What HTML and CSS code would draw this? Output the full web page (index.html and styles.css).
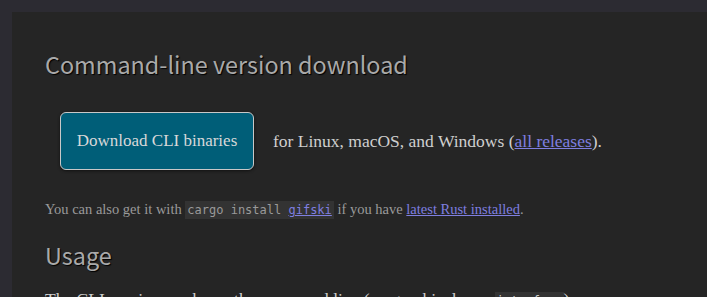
FILE: index.html
```html
<!DOCTYPE html>
<html>
<head lang="en">
    <meta charset="UTF-8">
    <title>gifski</title>
    <link rel="stylesheet" href="styles.css">
</head>
<body>
<div class="page">
    <h2>Command-line version download</h2>
    <div class="cli">
        <a class="button" href="javascript:;">Download CLI binaries</a>
        <p>for Linux, macOS, and Windows (<a href="javascript:;">all releases</a>).</p>
    </div>
    <p class="small">You can also get it with <code>cargo install <a href="javascript:;">gifski</a></code> if you have <a href="javascript:;">latest Rust installed</a>.</p>
    <h2>Usage</h2>
    <p class="usage">The CLI version works on the command line (no graphical user <code>interface</code>).</p>
</div>
</body>
</html>
```

FILE: styles.css
```css
* {
    margin: 0;
    padding: 0;
}

body {
    background-color: #2c2b32;
    padding: 12px 0 0 12px;
    font-family: "Liberation Serif", serif;
    color: #cfcfcf;
}

.page {
    background-color: #252525;
    padding: 37px 33px 0 33px;
    min-height: 400px;
}

h2 {
    font-family: "Noto Sans CJK KR", "Noto Sans", sans-serif;
    font-weight: normal;
    font-size: 23.4px;
    color: #a9a9a9;
    text-shadow: 1px 1px 1px #000;
    line-height: 30px;
}

a {
    color: #7f7fe0;
}

.cli {
    display: flex;
    align-items: center;
    margin: 33px 0 0 15px;
}

.cli p {
    font-size: 17.5px;
    margin-left: 19px;
}

.button {
    display: block;
    width: 192px;
    height: 56px;
    line-height: 56px;
    text-align: center;
    border: 1px solid #c8c8c8;
    border-radius: 6px;
    background-color: #005e78;
    color: #d8d8d8;
    text-decoration: none;
    font-size: 17px;
    box-shadow: 0 1px 3px #111;
}

.small {
    font-size: 14.5px;
    color: #9a9a9a;
    margin: 31px 0 22px 0;
}

code {
    font-family: "DejaVu Sans Mono", monospace;
    font-size: 12px;
    background-color: #333;
    padding: 2px 2px;
}

.usage {
    margin-top: 19px;
    font-size: 17.5px;
}
```
